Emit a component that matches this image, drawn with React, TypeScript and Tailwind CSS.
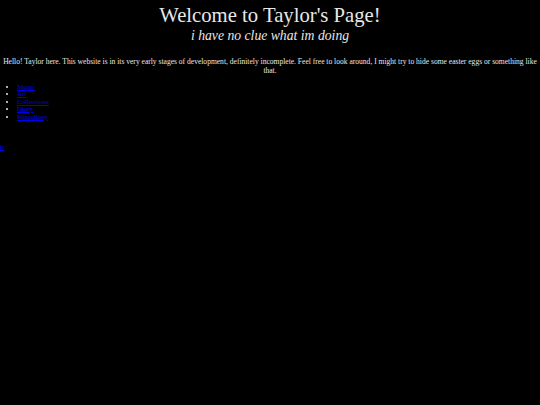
export default function App() {
  const links = ['Music', 'Art', 'Collections', 'Diary', 'Miscellany'];
  return (
    <div className="min-h-[405px] bg-black text-[#e8e8e8] font-['Liberation_Serif']">
      <div className="text-center pt-[3px]">
        <h1 className="text-[20.7px] leading-[24px]">Welcome to Taylor's Page!</h1>
        <h2 className="text-[13.7px] leading-[18px] italic">i have no clue what im doing</h2>
      </div>
      <p className="text-center text-[7.55px] leading-[9px] mt-[12px] px-[2px]">
        Hello! Taylor here. This website is in its very early stages of development, definitely incomplete. Feel free to look around, I might try to hide some easter eggs or something like that.
      </p>
      <ul className="list-disc pl-[17px] mt-[8.5px] text-[7px] leading-[7.5px] marker:text-[#e8e8e8]">
        {links.map(l => (
          <li key={l}>
            <a href="#" className="text-[#0000ee] underline">{l}</a>
          </li>
        ))}
      </ul>
      <div className="mt-[22px] text-[7px] leading-[8px]">
        <a href="#" className="text-[#0000ee] underline">ir</a>
      </div>
    </div>
  );
}
